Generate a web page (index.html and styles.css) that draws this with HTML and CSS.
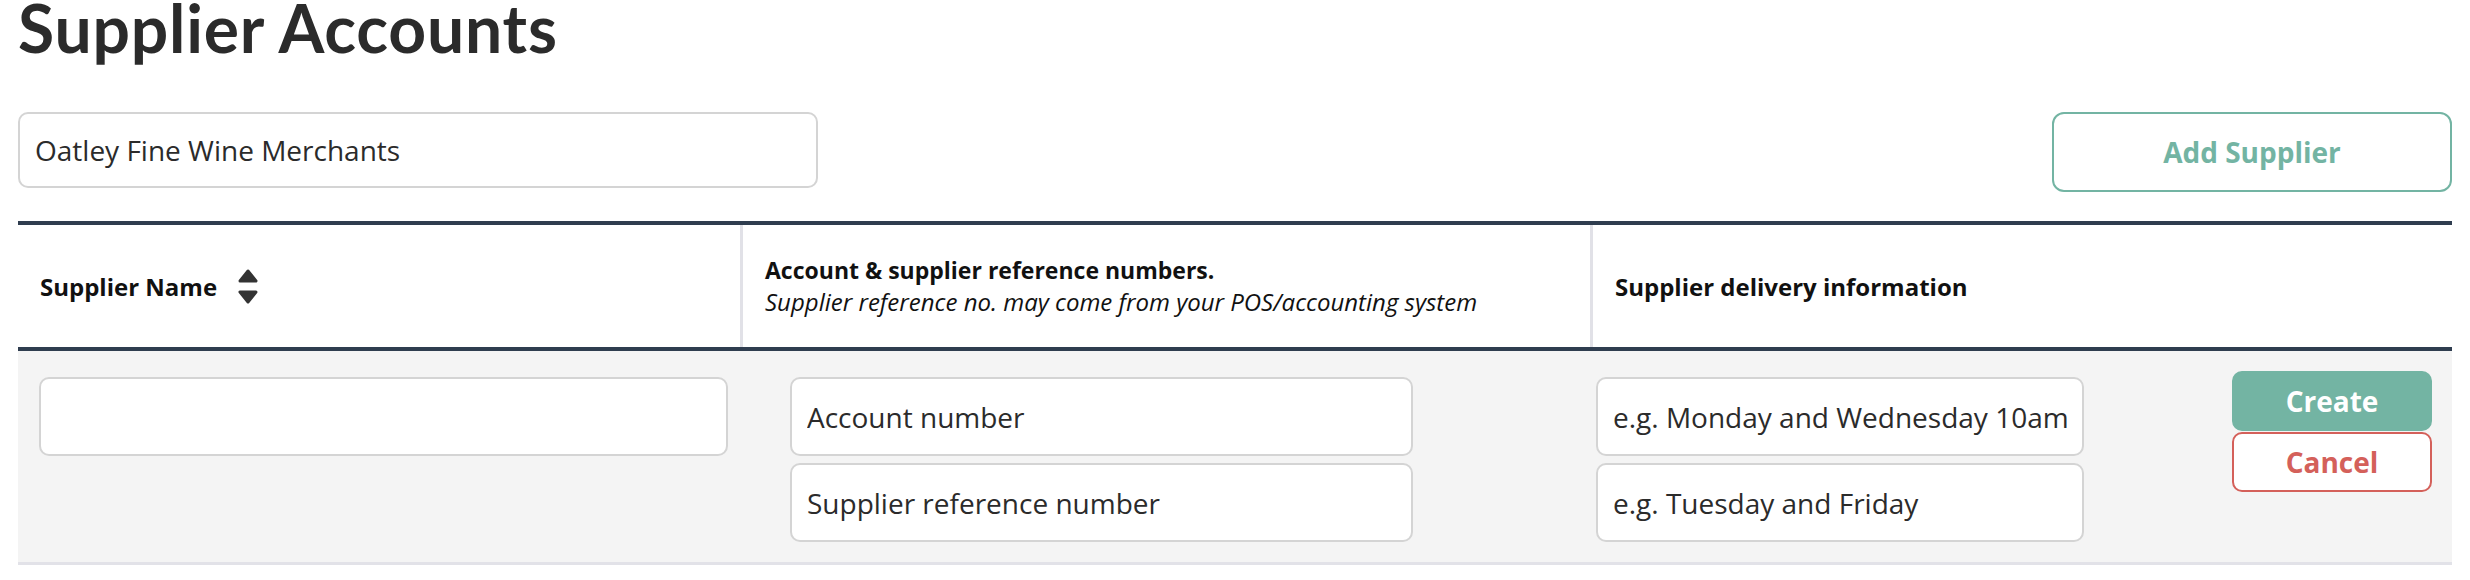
FILE: index.html
```html
<!DOCTYPE html>
<html lang="en">
<head>
<meta charset="utf-8">
<title>Supplier Accounts</title>
<link rel="stylesheet" href="styles.css">
</head>
<body>
<div class="page">
  <h1 class="title">Supplier Accounts</h1>
  <div class="toolbar">
    <input class="field search" type="text" value="Oatley Fine Wine Merchants">
    <button class="btn btn-outline">Add Supplier</button>
  </div>
  <div class="table">
    <div class="thead">
      <div class="th th-name">
        <span>Supplier Name</span>
        <svg class="sort" width="20" height="36" viewBox="0 0 20 36">
          <path d="M10 2 L18 12 L2 12 Z" fill="#333" stroke="#333" stroke-width="3" stroke-linejoin="round"/>
          <path d="M2 23 L18 23 L10 33 Z" fill="#333" stroke="#333" stroke-width="3" stroke-linejoin="round"/>
        </svg>
      </div>
      <div class="th th-ref">
        <strong>Account &amp; supplier reference numbers.</strong>
        <em>Supplier reference no. may come from your POS/accounting system</em>
      </div>
      <div class="th th-del">
        <strong>Supplier delivery information</strong>
      </div>
    </div>
    <div class="row">
      <div class="cell cell-name">
        <input class="field" type="text">
      </div>
      <div class="cell cell-ref">
        <input class="field" type="text" placeholder="Account number">
        <input class="field" type="text" placeholder="Supplier reference number">
      </div>
      <div class="cell cell-del">
        <input class="field" type="text" placeholder="e.g. Monday and Wednesday 10am">
        <input class="field" type="text" placeholder="e.g. Tuesday and Friday">
      </div>
      <div class="cell cell-actions">
        <button class="btn btn-create">Create</button>
        <button class="btn btn-cancel">Cancel</button>
      </div>
    </div>
  </div>
</div>
</body>
</html>
```

FILE: styles.css
```css
* { box-sizing: border-box; }

body {
  margin: 0;
  background: #ffffff;
  font-family: "Open Sans", "Noto Sans", sans-serif;
  color: #2b2b2b;
}

.page {
  padding: 0 18px;
}

.title {
  margin: 0 0 56px 0;
  font-family: "Lato", "Open Sans", sans-serif;
  font-weight: 700;
  font-size: 66px;
  line-height: 56px;
  letter-spacing: 0.8px;
  color: #2b2b2b;
  height: 56px;
}

.toolbar {
  display: flex;
  justify-content: space-between;
  align-items: flex-start;
  height: 109px;
}

.field {
  display: block;
  height: 79px;
  border: 2px solid #d4d4d4;
  border-radius: 10px;
  background: #ffffff;
  font-family: "Open Sans", sans-serif;
  font-size: 28px;
  color: #2b2b2b;
  padding: 0 15px;
  outline: none;
}

.field::placeholder {
  color: #2b2b2b;
  opacity: 1;
}

.search {
  width: 800px;
  height: 76px;
}

.btn {
  font-family: "Open Sans", sans-serif;
  font-weight: 700;
  cursor: pointer;
  border-radius: 12px;
}

.btn-outline {
  width: 400px;
  height: 80px;
  background: #ffffff;
  border: 2px solid #73b4a3;
  color: #73b4a3;
  font-size: 28px;
}

.table {
  width: 100%;
}

.thead {
  display: grid;
  grid-template-columns: 725px 850px 1fr;
  border-top: 4px solid #2f3d4f;
  border-bottom: 4px solid #2f3d4f;
  height: 130px;
}

.th {
  display: flex;
  align-items: center;
  font-size: 24px;
  color: #111111;
  padding-left: 22px;
}

.th-name,
.th-ref {
  border-right: 3px solid #e1e1e7;
}

.th-name span {
  font-weight: 700;
}

.sort {
  margin-left: 21px;
  margin-top: 2px;
}

.th-ref {
  flex-direction: column;
  align-items: flex-start;
  justify-content: center;
  padding-left: 22px;
  line-height: 31px;
}

.th-ref strong { font-weight: 700; font-size: 23px; }
.th-ref em { font-style: italic; font-size: 24px; }

.th-del strong { font-weight: 700; }

.row {
  display: grid;
  grid-template-columns: 725px 850px 1fr 240px;
  background: #f4f4f4;
  border-bottom: 3px solid #e2e2e8;
  align-items: start;
}

.cell {
  display: flex;
  flex-direction: column;
  gap: 7px;
  padding-top: 26px;
  padding-bottom: 20px;
}

.cell-name { padding-left: 21px; padding-right: 15px; }
.cell-name .field { width: 689px; }

.cell-ref { padding-left: 47px; }
.cell-ref .field { width: 623px; }

.cell-del { padding-left: 3px; }
.cell-del .field { width: 488px; }

.cell-actions {
  padding-top: 20px;
  gap: 1px;
  align-items: flex-end;
  padding-right: 20px;
}

.btn-create,
.btn-cancel {
  width: 200px;
  height: 60px;
  font-size: 28px;
  border-radius: 10px;
}

.btn-create {
  background: #73b4a3;
  border: 2px solid #73b4a3;
  color: #ffffff;
}

.btn-cancel {
  background: #ffffff;
  border: 2px solid #d4605a;
  color: #d4605a;
}
```
